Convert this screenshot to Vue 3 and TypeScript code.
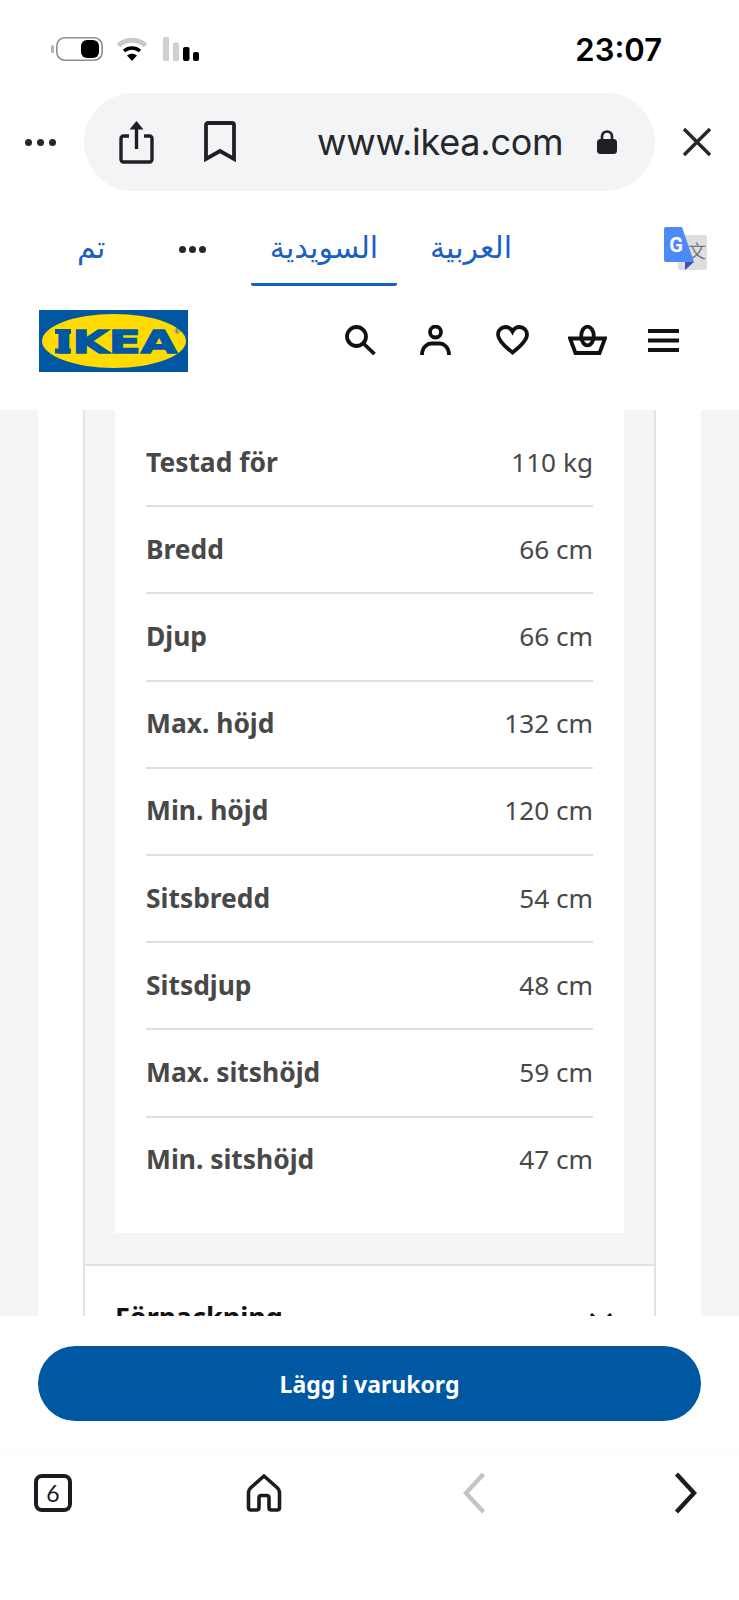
<script setup lang="ts">
interface SpecRow {
  label: string
  value: string
}

const rows: SpecRow[] = [
  { label: 'Testad för', value: '110 kg' },
  { label: 'Bredd', value: '66 cm' },
  { label: 'Djup', value: '66 cm' },
  { label: 'Max. höjd', value: '132 cm' },
  { label: 'Min. höjd', value: '120 cm' },
  { label: 'Sitsbredd', value: '54 cm' },
  { label: 'Sitsdjup', value: '48 cm' },
  { label: 'Max. sitshöjd', value: '59 cm' },
  { label: 'Min. sitshöjd', value: '47 cm' }
]
</script>

<template>
  <div class="screen">
    <!-- status bar -->
    <div class="status">
      <svg width="52" height="24" viewBox="0 0 52 24">
        <rect x="0" y="8" width="3" height="8" rx="1.5" fill="#b5b5b5" />
        <rect x="5.8" y="0.8" width="45.4" height="22.4" rx="8" fill="#fff" stroke="#8f8f8f" stroke-width="1.6" />
        <rect x="30" y="3" width="18" height="18" rx="6" fill="#000" />
      </svg>
      <svg class="wifi" width="30" height="24" viewBox="0 0 30 24">
        <path d="M1.5 8.5C9 1.5 21 1.5 28.5 8.5" fill="none" stroke="#c9c9c9" stroke-width="5" />
        <path d="M7 14C11.5 10 18.5 10 23 14" fill="none" stroke="#000" stroke-width="3.6" />
        <path d="M10 18.5C13 16 17 16 20 18.5L15 24Z" fill="#000" />
      </svg>
      <svg class="bars" width="36" height="24" viewBox="0 0 36 24">
        <rect x="0" y="0" width="6" height="24" rx="1.5" fill="#cfcfcf" />
        <rect x="10" y="5.5" width="6" height="18.5" rx="1.5" fill="#cfcfcf" />
        <rect x="20" y="10" width="6.5" height="14" rx="2" fill="#000" />
        <rect x="30" y="15" width="6" height="9" rx="2" fill="#000" />
      </svg>
      <span class="time">23:07</span>
    </div>

    <!-- browser bar -->
    <div class="browser">
      <div class="more">
        <i></i><i></i><i></i>
      </div>
      <div class="pill">
        <svg width="35" height="44" viewBox="0 0 35 44">
          <path d="M10 16H4.5A2.5 2.5 0 0 0 2 18.5V39.5A2.5 2.5 0 0 0 4.5 42H30.5A2.5 2.5 0 0 0 33 39.5V18.5A2.5 2.5 0 0 0 30.5 16H25" fill="none" stroke="#1f2023" stroke-width="3.4" />
          <path d="M17.5 29V3" fill="none" stroke="#1f2023" stroke-width="3.4" />
          <path d="M10.5 9.5L17.5 1L24.5 9.5Z" fill="#1f2023" />
        </svg>
        <svg class="bookmark" width="32" height="42" viewBox="0 0 32 42">
          <path d="M2 4A2 2 0 0 1 4 2H28A2 2 0 0 1 30 4V38L16 30L2 38Z" fill="none" stroke="#1f2023" stroke-width="3.8" />
        </svg>
        <span class="url">www.ikea.com</span>
        <svg class="lock" width="20" height="24" viewBox="0 0 20 24">
          <path d="M5 11V6.5C5 -0.2 15 -0.2 15 6.5V11" fill="none" stroke="#1f2023" stroke-width="2.6" />
          <rect x="0" y="9" width="20" height="15" rx="3.5" fill="#1f2023" />
        </svg>
      </div>
      <svg class="close" width="30" height="30" viewBox="0 0 30 30">
        <path d="M2 2L28 28M28 2L2 28" stroke="#25272b" stroke-width="3.4" />
      </svg>
    </div>

    <!-- translate bar -->
    <div class="translate">
      <span class="lang done">تم</span>
      <div class="more dark">
        <i></i><i></i><i></i>
      </div>
      <span class="lang tab">السويدية</span>
      <span class="lang source">العربية</span>
      <svg class="gt" width="43" height="43" viewBox="0 0 43 43">
        <rect x="14" y="8" width="29" height="35" rx="2" fill="#dedede" />
        <text x="33" y="31" class="gt-glyph">文</text>
        <path d="M2 0H18L30 35H2A2 2 0 0 1 0 33V2A2 2 0 0 1 2 0Z" fill="#4c8bf5" />
        <path d="M21 35H30L21 43Z" fill="#3f51b5" />
        <text x="12" y="25" class="gt-letter">G</text>
      </svg>
    </div>

    <!-- site header -->
    <header class="site">
      <svg width="149" height="62" viewBox="0 0 149 62">
        <rect width="149" height="62" fill="#0058a3" />
        <ellipse cx="75" cy="31" rx="72" ry="27" fill="#ffdb00" />
        <text x="16" y="43" class="logo-text" textLength="122" lengthAdjust="spacingAndGlyphs">IKEA</text>
        <!-- slab ends of the I -->
        <rect x="16" y="19" width="16" height="5" fill="#0058a3" />
        <rect x="16" y="38.5" width="16" height="5" fill="#0058a3" />
        <text x="135" y="24" class="logo-mark">®</text>
      </svg>
      <div class="site-icons">
        <svg width="31" height="30" viewBox="0 0 31 30">
          <circle cx="11.5" cy="11.5" r="9.5" fill="none" stroke="#111" stroke-width="3.8" />
          <path d="M18.5 18.5L29.5 29" stroke="#111" stroke-width="3.8" />
        </svg>
        <svg class="person" width="31" height="30" viewBox="0 0 31 30">
          <circle cx="15.5" cy="7" r="5.5" fill="none" stroke="#111" stroke-width="3.8" />
          <path d="M2 30C2 21.5 8 18.5 11 18.5H20C23 18.5 29 21.5 29 30" fill="none" stroke="#111" stroke-width="3.8" />
        </svg>
        <svg class="heart" width="33" height="30" viewBox="0 0 33 30">
          <path d="M16.5 27.5C10 22.5 2 16 2 9.5C2 5 5.5 2 9.5 2C12.5 2 15 3.5 16.5 6.5C18 3.5 20.5 2 23.5 2C27.5 2 31 5 31 9.5C31 16 23 22.5 16.5 27.5Z" fill="none" stroke="#111" stroke-width="3.8" />
        </svg>
        <svg class="basket" width="39" height="30" viewBox="0 0 39 30">
          <path d="M2 13.5H37L31.5 28H7.5Z" fill="none" stroke="#111" stroke-width="3.8" />
          <ellipse cx="19.5" cy="11" rx="6.3" ry="9.3" fill="none" stroke="#111" stroke-width="3.8" />
        </svg>
        <svg class="menu" width="31" height="24" viewBox="0 0 31 24">
          <path d="M0 3H31M0 12.5H31M0 22H31" stroke="#111" stroke-width="4" />
        </svg>
      </div>
    </header>

    <!-- scrolled page -->
    <main class="content">
      <div class="sheet">
        <div class="accordion">
          <div class="panel-wrap">
            <div class="panel">
              <div v-for="row in rows" :key="row.label" class="row">
                <span class="label">{{ row.label }}</span>
                <span class="value">{{ row.value }}</span>
              </div>
            </div>
          </div>
          <div class="section">
            <span>Förpackning</span>
            <svg width="22" height="14" viewBox="0 0 22 14">
              <path d="M1 2L11 12L21 2" fill="none" stroke="#111" stroke-width="3" />
            </svg>
          </div>
        </div>
      </div>
    </main>

    <!-- add to cart -->
    <div class="buy">
      <button class="buy-btn">Lägg i varukorg</button>
    </div>

    <!-- browser toolbar -->
    <nav class="toolbar">
      <div class="tabs-count">6</div>
      <svg class="home" width="36" height="38" viewBox="0 0 36 38">
        <path d="M18 2L31.5 14Q33.5 16 33.5 18.5V33.5Q33.5 36 31 36H25.5Q23 36 23 33.5V24Q23 21.5 20.5 21.5H15.5Q13 21.5 13 24V33.5Q13 36 10.5 36H5Q2.5 36 2.5 33.5V18.5Q2.5 16 4.5 14Z" fill="none" stroke="#1c1c1e" stroke-width="3.6" stroke-linejoin="round" />
      </svg>
      <svg class="back" width="24" height="42" viewBox="0 0 24 42">
        <path d="M21.5 2L4 21L21.5 40" fill="none" stroke="#c3c3c8" stroke-width="4.4" />
      </svg>
      <svg class="forward" width="24" height="42" viewBox="0 0 24 42">
        <path d="M2.5 2L20 21L2.5 40" fill="none" stroke="#1c1c1e" stroke-width="4.4" />
      </svg>
    </nav>
  </div>
</template>

<style>
html,
body {
  margin: 0;
  background: #fff;
}
</style>

<style scoped>
.screen {
  width: 739px;
  height: 1600px;
  overflow: hidden;
  display: flex;
  flex-direction: column;
  background: #fff;
  font-family: "Noto Sans", sans-serif;
}

.status {
  height: 24px;
  margin: 37px 0 32px;
  padding: 0 77px 0 51px;
  display: flex;
  align-items: center;
}

.wifi {
  margin-left: 14px;
}

.bars {
  margin-left: 16px;
}

.time {
  margin-left: auto;
  font-family: Inter, sans-serif;
  font-size: 31px;
  font-weight: 600;
  color: #000;
}

.browser {
  height: 98px;
  display: flex;
  align-items: center;
}

.more {
  display: flex;
  gap: 5px;
  width: 84px;
  padding-left: 25px;
  box-sizing: border-box;
  flex-shrink: 0;
}

.more i {
  width: 7px;
  height: 7px;
  border-radius: 50%;
  background: #25272b;
}

.pill {
  width: 571px;
  height: 98px;
  flex-shrink: 0;
  border-radius: 49px;
  background: #f3f4f6;
  display: flex;
  align-items: center;
  padding-left: 35px;
  box-sizing: border-box;
}

.bookmark {
  margin-left: 50px;
}

.url {
  width: 246px;
  margin-left: 81px;
  font-family: Inter, sans-serif;
  font-size: 36px;
  color: #25272b;
  letter-spacing: -0.25px;
  white-space: nowrap;
}

.lock {
  margin-left: 34px;
}

.close {
  margin-left: 27px;
}

.translate {
  height: 95px;
  display: flex;
  align-items: flex-end;
  padding-left: 77px;
}

.lang {
  font-family: "DejaVu Sans", sans-serif;
  font-size: 30px;
  color: #1a5fc4;
  line-height: 40px;
  white-space: nowrap;
}

.done {
  width: 102px;
  margin-bottom: 18px;
}

.more.dark {
  width: 72px;
  padding-left: 0;
  margin-bottom: 33px;
  gap: 3px;
}

.tab {
  width: 146px;
  height: 61px;
  padding-top: 3px;
  text-align: center;
  border-bottom: 3px solid #1a5fc4;
  border-radius: 0 0 2px 2px;
  box-sizing: border-box;
}

.source {
  margin-left: 33px;
  width: 81px;
  margin-bottom: 18px;
  text-align: center;
}

.gt {
  margin-left: auto;
  margin-right: 32px;
  margin-bottom: 16px;
}

.gt-letter {
  font-family: Roboto, sans-serif;
  font-size: 20px;
  font-weight: 700;
  fill: #fff;
  text-anchor: middle;
}

.gt-glyph {
  font-family: "Noto Sans CJK SC", sans-serif;
  font-size: 18px;
  fill: #6f7a80;
  text-anchor: middle;
}

.site {
  height: 124px;
  padding: 24px 0 0 39px;
  box-sizing: border-box;
  display: flex;
  align-items: flex-start;
}

.logo-text {
  font-family: "DejaVu Sans", sans-serif;
  font-size: 32px;
  font-weight: 700;
  fill: #0058a3;
  stroke: #0058a3;
  stroke-width: 1.4px;
}

.logo-mark {
  font-family: "Liberation Sans", sans-serif;
  font-size: 8px;
  fill: #0058a3;
}

.site-icons {
  display: flex;
  align-items: center;
  margin: 15px 0 0 157px;
}

.person {
  margin-left: 44px;
}

.heart {
  margin-left: 45px;
}

.basket {
  margin-left: 39px;
}

.menu {
  margin-left: 41px;
}

.content {
  height: 906px;
  overflow: hidden;
  background: #f5f5f5;
  padding: 0 38px;
  flex-shrink: 0;
}

.sheet {
  background: #fff;
  padding: 0 45px;
  height: 100%;
}

.accordion {
  border-left: 2px solid #e2e2e2;
  border-right: 2px solid #e2e2e2;
}

.panel-wrap {
  background: #f5f5f5;
  padding: 0 30px 31px;
  border-bottom: 2px solid #e2e2e2;
}

.panel {
  background: #fff;
  padding: 10px 31px 28px;
}

.row {
  height: 87.2px;
  box-sizing: border-box;
  padding-bottom: 2px;
  display: flex;
  justify-content: space-between;
  align-items: center;
  font-size: 26.4px;
  color: #484848;
  border-bottom: 2px solid #dfdfdf;
}

.row:last-child {
  border-bottom: none;
  padding-bottom: 4px;
}

.label {
  font-weight: 700;
}

.value {
  font-size: 26.2px;
}

.section {
  padding: 32px 42px 0 30px;
  display: flex;
  justify-content: space-between;
  align-items: flex-start;
  font-size: 27px;
  font-weight: 700;
  color: #111;
}

.section svg {
  margin-top: 14px;
}

.buy {
  height: 134px;
  box-sizing: border-box;
  padding: 30px 38px 0;
  background: #fff;
  border-bottom: 1px solid #fafafa;
  flex-shrink: 0;
}

.buy-btn {
  width: 100%;
  height: 75px;
  border: none;
  border-radius: 38px;
  background: #0058a3;
  color: #fff;
  font-family: "Noto Sans", sans-serif;
  font-size: 23px;
  font-weight: 700;
}

.toolbar {
  display: flex;
  align-items: center;
  height: 86px;
  padding-left: 34px;
}

.tabs-count {
  width: 38px;
  height: 38px;
  box-sizing: border-box;
  border: 4px solid #1c1c1e;
  border-radius: 8px;
  display: flex;
  align-items: center;
  justify-content: center;
  font-family: Lato, sans-serif;
  font-size: 23px;
  color: #1c1c1e;
}

.home {
  margin-left: 174px;
}

.back {
  margin-left: 180px;
}

.forward {
  margin-left: 188px;
}
</style>
